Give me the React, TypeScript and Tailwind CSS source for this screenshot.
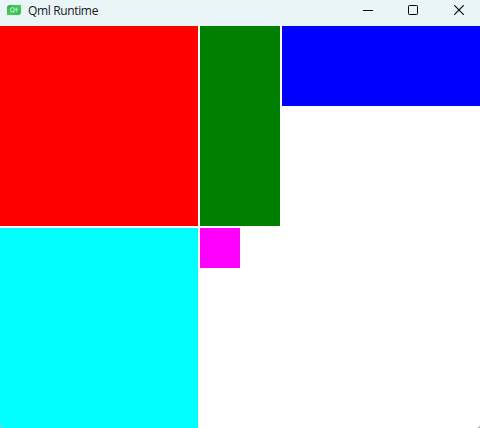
function QtIcon() {
  return (
    <svg className="ml-[7px] shrink-0" width="14" height="10" viewBox="0 0 14 10">
      <defs>
        <linearGradient id="qt" x1="0" y1="0" x2="1" y2="1">
          <stop offset="0" stopColor="#2fae48" />
          <stop offset="0.5" stopColor="#48cc5e" />
          <stop offset="1" stopColor="#2dbb45" />
        </linearGradient>
      </defs>
      <path d="M1.8 0H14V8.2L12.2 10H0V1.8Z" fill="url(#qt)" />
      <g fill="none" stroke="#c9f2cf" strokeWidth="0.9">
        <ellipse cx="5.4" cy="4.8" rx="1.9" ry="2.3" />
        <path d="M6 6.4L7.3 7.8M9.3 2.6V6.9M8.3 4.3H11" />
      </g>
    </svg>
  );
}

function TitleBar() {
  return (
    <header className="flex h-[26px] items-start bg-[#eaf5f8]">
      <div className="flex h-5 items-center">
        <QtIcon />
        <span className="ml-[7px] whitespace-nowrap pt-[2px] font-['Open_Sans','Noto_Sans',sans-serif] text-[12px] leading-[20px] tracking-[-0.35px] text-[#191919]">
          Qml Runtime
        </span>
      </div>
      <div className="ml-auto flex h-5 items-center pr-4 text-black">
        <button aria-label="Minimize" className="mr-[35px]">
          <svg className="block" width="10" height="10" viewBox="0 0 10 10">
            <path d="M0 5.5H10" stroke="currentColor" />
          </svg>
        </button>
        <button aria-label="Maximize" className="mr-9">
          <svg className="block" width="10" height="10" viewBox="0 0 10 10">
            <rect x="0.5" y="0.5" width="9" height="9" rx="0.8" fill="none" stroke="currentColor" />
          </svg>
        </button>
        <button aria-label="Close">
          <svg className="block" width="10" height="10" viewBox="0 0 10 10">
            <path d="M0.2 0.2L9.8 9.8M9.8 0.2L0.2 9.8" stroke="currentColor" strokeWidth="1.1" />
          </svg>
        </button>
      </div>
    </header>
  );
}

export default function App() {
  return (
    <div className="h-[428px] w-[480px] overflow-hidden bg-[#a8a8a8]">
      <div className="h-full overflow-hidden rounded-b-[4px] bg-white">
        <TitleBar />
        <main className="grid grid-cols-[198px_80px_198px] grid-rows-[200px_200px] gap-[2px]">
          <div className="bg-[#ff0000]" />
          <div className="bg-[#008000]" />
          <div className="h-20 bg-[#0000ff]" />
          <div className="bg-[#00ffff]" />
          <div className="size-10 bg-[#ff00ff]" />
        </main>
      </div>
    </div>
  );
}
